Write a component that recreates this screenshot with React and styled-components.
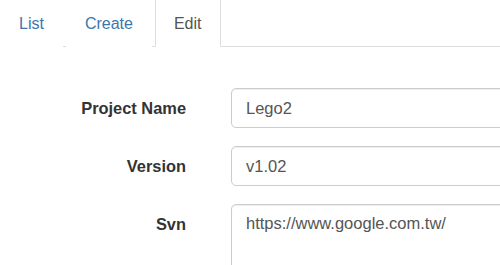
import React from 'react'
import styled, { createGlobalStyle } from 'styled-components'

const GlobalStyle = createGlobalStyle`
  html, body {
    margin: 0;
    padding: 0;
    background: #fff;
    overflow: hidden;
  }
  body {
    font-family: "Liberation Sans", Arial, Helvetica, sans-serif;
    font-size: 16px;
    color: #333;
  }
`

const Page = styled.div`
  width: 500px;
  height: 265px;
  overflow: hidden;
`

const Tabs = styled.ul`
  display: flex;
  margin: -4px 0 0;
  padding: 0;
  list-style: none;
  border-bottom: 1px solid #ddd;
`

const Tab = styled.li`
  margin: 0 3px -1px 0;
  padding: 15px 18px 11px;
  line-height: 23px;
  font-size: 16px;
  border: 1px solid ${({ active }) => (active ? '#ddd' : 'transparent')};
  border-bottom-color: transparent;
  border-radius: 5px 5px 0 0;
  background: #fff;
  color: ${({ active }) => (active ? '#555' : '#3a76ad')};
  cursor: pointer;
`

const Form = styled.form`
  display: grid;
  grid-template-columns: 186px 320px;
  column-gap: 45px;
  row-gap: 18px;
  padding-top: 41px;
`

const Label = styled.label`
  text-align: right;
  font-weight: bold;
  font-size: 16.4px;
  line-height: 40px;
  color: #333;
`

const Input = styled.input`
  box-sizing: border-box;
  width: 100%;
  height: 40px;
  padding: 0 14px;
  border: 1px solid #ccc;
  border-radius: 5px;
  box-shadow: inset 0 1px 1px rgba(0, 0, 0, 0.075);
  font-family: inherit;
  font-size: 16.5px;
  color: #555;
  outline: none;
`

const TextArea = styled.textarea`
  box-sizing: border-box;
  width: 100%;
  height: 90px;
  padding: 7px 14px;
  border: 1px solid #ccc;
  border-radius: 5px;
  box-shadow: inset 0 1px 1px rgba(0, 0, 0, 0.075);
  font-family: inherit;
  font-size: 16.5px;
  line-height: 23px;
  color: #555;
  resize: none;
  outline: none;
`

const App = () => {
  return (
    <Page>
      <GlobalStyle />
      <Tabs>
        <Tab>List</Tab>
        <Tab>Create</Tab>
        <Tab active>Edit</Tab>
      </Tabs>
      <Form>
        <Label>Project Name</Label>
        <Input defaultValue="Lego2" />
        <Label>Version</Label>
        <Input defaultValue="v1.02" />
        <Label>Svn</Label>
        <TextArea defaultValue="https://www.google.com.tw/" />
      </Form>
    </Page>
  )
}

export default App
